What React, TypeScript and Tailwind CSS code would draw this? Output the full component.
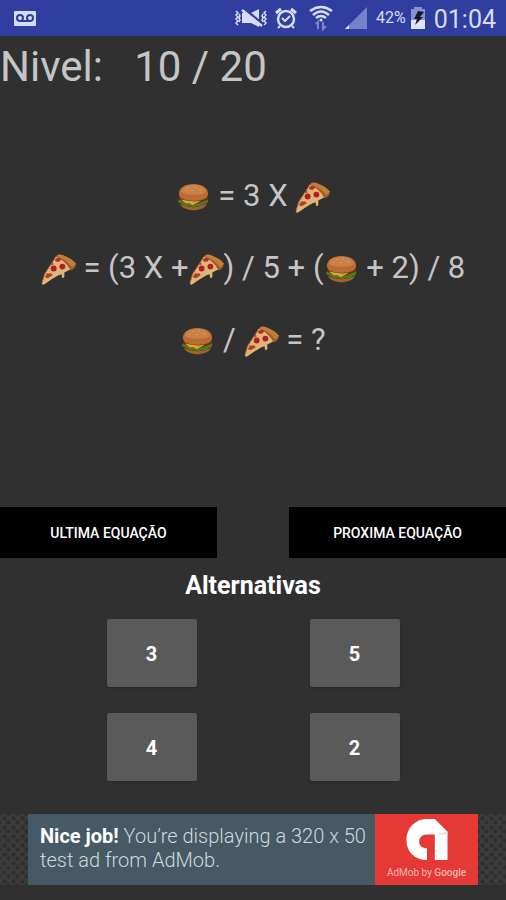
import React from "react";

function Burger() {
  return (
    <svg viewBox="0 0 36 36" className="inline-block h-[35px] w-[35px] align-[-9px]" role="img" aria-label="hambúrguer">
      <path d="M4 23c0 5 6 8 14 8s14-3 14-8z" fill="#a9602c" />
      <path d="M3 17q15 8 30 0v5q-2 5-15 6Q5 27 3 22z" fill="#6b2d14" />
      <path d="M3 20l4 2 6 2 6 1 7-2 7-3v3l-4 2-2 2-5 0-3 1-5-1-5 0-3-3-4-1z" fill="#4d7a24" />
      <path d="M5 20l6 1 8 1 7-1-5 3-4 2-3-2-4 0z" fill="#dfa42e" />
      <path d="M3 14C3 8 9 4 18 4s15 4 15 10c0 3-2 5-5 6q-10 3-20 0c-3-1-5-3-5-6z" fill="#b96c34" />
      <path d="M5 12c2-5 6-7 13-7s11 2 13 7c-2 2-7 3-13 3S7 14 5 12z" fill="#c98147" />
      <path d="M12 8l2 0M19 7l2 1M24 10l2 0M16 11l2 0M9 11l1 0" stroke="#dda268" strokeWidth="1" />
    </svg>
  );
}

function Pizza() {
  return (
    <svg viewBox="0 0 36 36" className="inline-block h-[35px] w-[35px] align-[-9px]" role="img" aria-label="pizza">
      <path d="M15 5l2-2q2-1 5 0 9 3 14 9l-1 4-4 3z" fill="#a05c28" />
      <path d="M17 3q2-1 5 0 9 3 14 9l-4 4Q27 8 16 5z" fill="#c27c3b" />
      <path d="M15 5q9 3 15 13l-6 3v5l-2 1-1-4-3 1-7 4-7 5q-3 2-3-1l3-9z" fill="#deb778" />
      <path d="M15 6L4 22 1 32" fill="none" stroke="#b87038" strokeWidth="1" />
      <ellipse cx="17.500" cy="8" rx="3" ry="2" transform="rotate(-15 17.500 8)" fill="#b62d29" />
      <circle cx="22" cy="15" r="3" fill="#b31d25" />
      <circle cx="13" cy="17" r="3" fill="#b31d25" />
      <path d="M6 22l5 0 1 2-5 3-3-1z" fill="#b83a2b" />
      <path d="M10 13l2-3 1 3z" fill="#b83a2b" />
    </svg>
  );
}

function StatusBar() {
  return (
    <header className="flex h-9 items-center justify-between bg-[#303f9f] pr-2.5 pl-3.5 text-[#d7dcf5]">
      <svg viewBox="0 0 22 15" className="h-[15px] w-[22px]" aria-label="Correio de voz">
        <rect width="22" height="15" rx="1" fill="#d5dbfa" />
        <g fill="none" stroke="#303f9f" strokeWidth="2">
          <circle cx="6" cy="7" r="3" />
          <circle cx="16" cy="7" r="3" />
          <path d="M6 10h10" />
        </g>
      </svg>
      <div className="flex items-center">
        <svg viewBox="0 0 34 24" className="h-6 w-[34px]" fill="none" stroke="currentColor" strokeWidth="2" aria-label="Vibrar">
          <path d="M2 5l2 2-2 2 2 2-2 2 2 2-2 2 2 2M5 8l1 2-1 2 1 2-1 2M32 5l-2 2 2 2-2 2 2 2-2 2 2 2-2 2M29 8l-1 2 1 2-1 2 1 2" strokeWidth="1.500" />
          <path d="M8 7v10h9l8 4V3l-8 4z" fill="currentColor" stroke="none" />
          <path d="M8 2l21 17" stroke="#303f9f" strokeWidth="4" />
          <path d="M8 4l20 16" strokeWidth="2.500" />
        </svg>
        <svg viewBox="0 0 24 24" className="ml-1.5 h-6 w-6" fill="none" stroke="currentColor" strokeWidth="2" aria-label="Alarme">
          <circle cx="12" cy="13" r="8" strokeWidth="2.500" />
          <path d="M2 7l5-4M22 7l-5-4" strokeWidth="3" />
          <path d="M6 20l-2 2M18 20l2 2M8 12l3 3 5-5" />
        </svg>
        <svg viewBox="0 0 26 26" className="ml-2.5 h-[26px] w-[26px]" fill="none" stroke="currentColor" strokeWidth="2" aria-label="Wi-Fi">
          <path d="M2 6q11-8 22 0M5 10q8-7 16 0M8 13q5-4 10 0" strokeWidth="2.500" />
          <circle cx="13" cy="15" r="1.500" fill="currentColor" stroke="none" />
          <path d="M10 24v-7l-2 2M15 17v7l3-3" stroke="#7987cc" />
        </svg>
        <svg viewBox="0 0 24 24" className="ml-2.5 h-6 w-6" aria-label="Sinal">
          <path d="M23 1v22H1z" fill="#7482c7" />
          <path d="M5 19v4H1z" fill="#e4e8ff" />
        </svg>
        <span className="ml-2 text-base">42%</span>
        <svg viewBox="0 0 16 24" className="ml-1 h-6 w-4" aria-label="Bateria">
          <path d="M4 1h8v2h3v20H1V3h3z" fill="#8792cf" />
          <path d="M1 14h14v9H1z" fill="#e0e4fa" />
          <path d="M8 5l6 1-4 5h3l-8 8 2-6H4z" fill="#151827" />
        </svg>
        <span className="ml-2 pt-1 text-[25px] leading-8">01:04</span>
      </div>
    </header>
  );
}

function AdMobLogo() {
  return (
    <svg viewBox="0 0 44 44" className="h-11 w-11" role="img" aria-label="AdMob">
      <path d="M22 43C9 43 1 34 1 23 1 10 10 1 22 1h8l13 13v29H30V17h-8c-5 0-8 3-8 7s3 7 8 7z" fill="#fff" />
      <path d="M31 17h12v-3z" fill="#ddd" />
    </svg>
  );
}

function AdSide() {
  return (
    <div className="flex-1 bg-[#3c3c3c] bg-[radial-gradient(circle,#2e2e2e_1px,transparent_3px),radial-gradient(circle,#2e2e2e_1px,transparent_3px)] bg-[length:9px_9px] bg-[position:0_0,4px_4px]" />
  );
}

export default function App() {
  return (
    <div className="flex min-h-screen flex-col bg-[#303030] font-[Roboto,sans-serif] text-[#c5c5c5]">
      <StatusBar />
      <main className="flex flex-1 flex-col">
        <h1 className="h-[124px] text-[42px] leading-[62px] font-normal whitespace-pre">Nivel:   10 / 20</h1>
        <section className="flex h-[347px] flex-col items-center text-[31px] leading-[72px] whitespace-pre">
          <p><Burger /> = 3 X <Pizza /></p>
          <p><Pizza /> = (3 X +<Pizza />) / 5 + (<Burger /> + 2) / 8</p>
          <p><Burger /> / <Pizza /> = ?</p>
        </section>
        <nav className="grid grid-cols-[3fr_1fr_3fr] text-sm font-medium text-white">
          <button className="h-[51px] bg-black">ULTIMA EQUAÇÃO</button>
          <button className="col-start-3 h-[51px] bg-black">PROXIMA EQUAÇÃO</button>
        </nav>
        <h2 className="pt-3 text-center text-[25px] leading-8 font-bold text-white">Alternativas</h2>
        <div className="mt-[17px] grid grid-cols-[90px_90px] justify-center gap-x-[113px] gap-y-[26px] text-xl font-bold text-white">
          {["3", "5", "4", "2"].map((value) => (
            <button key={value} className="h-[68px] rounded-xs bg-[#5a5a5b] pt-0.5 shadow-sm">{value}</button>
          ))}
        </div>
      </main>
      <footer className="mb-[15px] flex h-[71px]">
        <AdSide />
        <div className="flex w-[450px]">
          <p className="flex-1 bg-[#455a64] pt-2.5 pl-3 text-xl leading-6 font-light whitespace-nowrap text-[#cfd8dc]">
            <b className="font-bold text-white">Nice job!</b> You’re displaying a 320 x 50<br />test ad from AdMob.
          </p>
          <div className="flex w-[103px] flex-col items-center bg-[#e53935] pt-1 text-[#f7b5b2]">
            <AdMobLogo />
            <span className="text-[10px] leading-6">AdMob by <span className="font-medium">Google</span></span>
          </div>
        </div>
        <AdSide />
      </footer>
    </div>
  );
}
